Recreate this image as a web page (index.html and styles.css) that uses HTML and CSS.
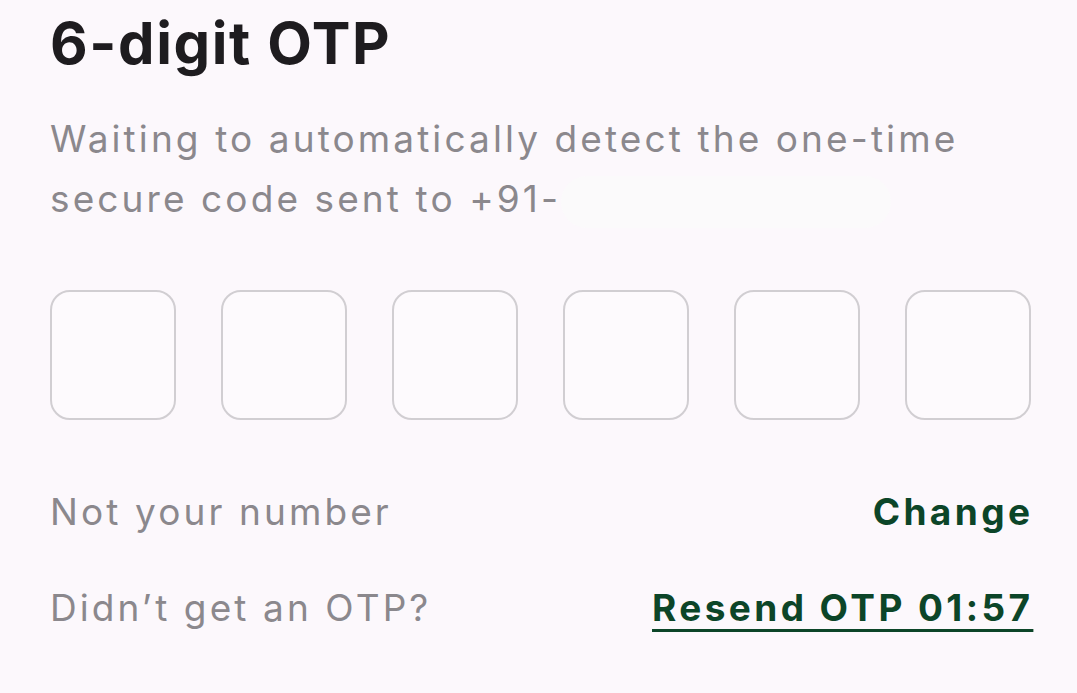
FILE: index.html
```html
<!DOCTYPE html>
<html lang="en">
<head>
<meta charset="utf-8">
<title>6-digit OTP</title>
<link rel="stylesheet" href="styles.css">
</head>
<body>
<main class="screen">
  <h1 class="title">6-digit OTP</h1>
  <p class="subtitle">Waiting to automatically detect the one-time secure code sent to +91-<span class="redacted"></span></p>
  <div class="otp">
    <div class="box"></div>
    <div class="box"></div>
    <div class="box"></div>
    <div class="box"></div>
    <div class="box"></div>
    <div class="box"></div>
  </div>
  <div class="row row-first">
    <span class="muted">Not your number</span>
    <a class="link">Change</a>
  </div>
  <div class="row">
    <span class="muted">Didn’t get an OTP?</span>
    <a class="link underline">Resend OTP 01:57</a>
  </div>
</main>
</body>
</html>
```

FILE: styles.css
```css
html, body {
  margin: 0;
  padding: 0;
  background: #fcf8fc;
}
body {
  font-family: Inter, "Noto Sans", sans-serif;
  width: 1077px;
  height: 693px;
  overflow: hidden;
}
.screen {
  padding: 8px 46px 0 50px;
}
.title {
  margin: 0;
  font-size: 58px;
  line-height: 70px;
  font-weight: 700;
  color: #1e1c1f;
  letter-spacing: 1.6px;
}
.subtitle {
  margin: 31px 0 0 0;
  font-size: 37px;
  line-height: 60px;
  font-weight: 400;
  color: #8b888d;
  letter-spacing: 3.1px;
}
.redacted {
  display: inline-block;
  width: 330px;
  height: 52px;
  vertical-align: -16px;
  border-radius: 26px;
  background: #fbfafb;
}
.otp {
  display: flex;
  justify-content: space-between;
  margin-top: 61px;
}
.box {
  width: 122px;
  height: 126px;
  border: 2px solid #d1ced2;
  border-radius: 20px;
  background: #fdfafd;
}
.row {
  display: flex;
  justify-content: space-between;
  align-items: baseline;
  font-size: 37px;
  line-height: 50px;
  margin-top: 46px;
  letter-spacing: 3.1px;
}
.row-first {
  margin-top: 67px;
}
.muted {
  color: #8b888d;
}
.link {
  color: #0c4528;
  font-weight: 700;
  letter-spacing: 3.4px;
  margin-right: -2.4px;
}
.underline {
  text-decoration: underline;
  text-decoration-thickness: 3px;
  text-underline-offset: 8px;
}
```
